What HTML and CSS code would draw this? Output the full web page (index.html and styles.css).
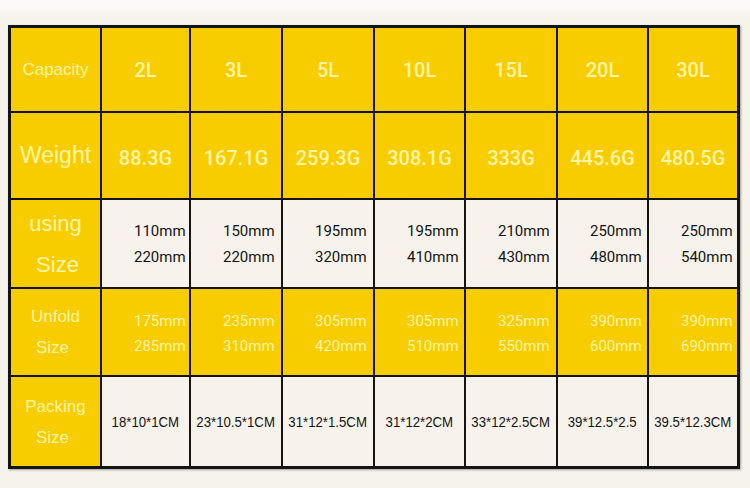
FILE: index.html
```html
<!DOCTYPE html>
<html>
<head>
<meta charset="utf-8">
<link rel="stylesheet" href="styles.css">
</head>
<body>
<div class="page">
  <div class="table">
    <div class="cell y label l17">Capacity</div>
    <div class="cell y head">2L</div>
    <div class="cell y head">3L</div>
    <div class="cell y head">5L</div>
    <div class="cell y head">10L</div>
    <div class="cell y head">15L</div>
    <div class="cell y head">20L</div>
    <div class="cell y head">30L</div>

    <div class="cell y label l23">Weight</div>
    <div class="cell y head wt">88.3G</div>
    <div class="cell y head wt">167.1G</div>
    <div class="cell y head wt">259.3G</div>
    <div class="cell y head wt">308.1G</div>
    <div class="cell y head wt">333G</div>
    <div class="cell y head wt">445.6G</div>
    <div class="cell y head wt">480.5G</div>

    <div class="cell y label l22 two"><span>using</span><span>Size</span></div>
    <div class="cell c mm"><span>110mm</span><span>220mm</span></div>
    <div class="cell c mm"><span>150mm</span><span>220mm</span></div>
    <div class="cell c mm"><span>195mm</span><span>320mm</span></div>
    <div class="cell c mm"><span>195mm</span><span>410mm</span></div>
    <div class="cell c mm"><span>210mm</span><span>430mm</span></div>
    <div class="cell c mm"><span>250mm</span><span>480mm</span></div>
    <div class="cell c mm"><span>250mm</span><span>540mm</span></div>

    <div class="cell y label l17 two2"><span>Unfold</span><span>Size</span></div>
    <div class="cell y mm light"><span>175mm</span><span>285mm</span></div>
    <div class="cell y mm light"><span>235mm</span><span>310mm</span></div>
    <div class="cell y mm light"><span>305mm</span><span>420mm</span></div>
    <div class="cell y mm light"><span>305mm</span><span>510mm</span></div>
    <div class="cell y mm light"><span>325mm</span><span>550mm</span></div>
    <div class="cell y mm light"><span>390mm</span><span>600mm</span></div>
    <div class="cell y mm light"><span>390mm</span><span>690mm</span></div>

    <div class="cell y label l17 two2"><span>Packing</span><span>Size</span></div>
    <div class="cell c pack"><span>18*10*1CM</span></div>
    <div class="cell c pack"><span>23*10.5*1CM</span></div>
    <div class="cell c pack"><span>31*12*1.5CM</span></div>
    <div class="cell c pack"><span>31*12*2CM</span></div>
    <div class="cell c pack"><span>33*12*2.5CM</span></div>
    <div class="cell c pack"><span>39*12.5*2.5</span></div>
    <div class="cell c pack"><span>39.5*12.3CM</span></div>
  </div>
</div>
</body>
</html>
```

FILE: styles.css
```css
html, body {
  margin: 0;
  padding: 0;
}
body {
  width: 750px;
  height: 488px;
  overflow: hidden;
  background: linear-gradient(#fbfaf8 0, #fbfaf8 8px, #f6f3ed 14px, #f6f3ed 100%);
  font-family: "Liberation Sans", Arial, sans-serif;
}
.page {
  padding-top: 25px;
  padding-left: 8px;
}
.table {
  width: 732px;
  height: 444px;
  box-sizing: border-box;
  border: 3px solid #161412;
  background: #161412;
  display: grid;
  grid-template-columns: 89px 87px 90px 90px 89px 90px 89px 88px;
  grid-template-rows: 83px 85px 87px 86px 89px;
  gap: 2px;
  box-shadow: 1px 1px 2px rgba(0,0,0,0.35);
}
.cell {
  display: flex;
  align-items: center;
  justify-content: center;
  overflow: visible;
  white-space: nowrap;
}
.y {
  background: #f8cd00;
}
.c {
  background: #f7f3ec;
}
.label {
  color: #fef4a6;
  font-family: "Liberation Sans", Arial, sans-serif;
  flex-direction: column;
}
.l17 { font-size: 17px; }
.l22 { font-size: 22px; }
.l23 { font-size: 23px; }
.two span { line-height: 41px; }
.two2 span { line-height: 31px; }
.two2 span + span { padding-right: 6px; }
.two span + span { padding-left: 4px; }
.head {
  color: #fef4a6;
  font-family: Roboto, "DejaVu Sans", sans-serif;
  font-size: 20px;
  font-weight: 500;
}
.wt {
  padding-top: 5px;
}
.mm {
  flex-direction: column;
  align-items: flex-start;
  justify-content: center;
  padding-left: 32px;
  font-family: Roboto, "DejaVu Sans", sans-serif;
  font-size: 15px;
  color: #141414;
}
.mm span {
  line-height: 26px;
}
.mm.light {
  color: #fef4a6;
  padding-top: 3px;
}
.mm.light span {
  line-height: 25px;
}
.pack {
  font-family: "Liberation Sans", Arial, sans-serif;
  font-size: 15px;
  color: #141414;
}
.pack span {
  display: inline-block;
  transform: scaleX(0.88);
}
```
